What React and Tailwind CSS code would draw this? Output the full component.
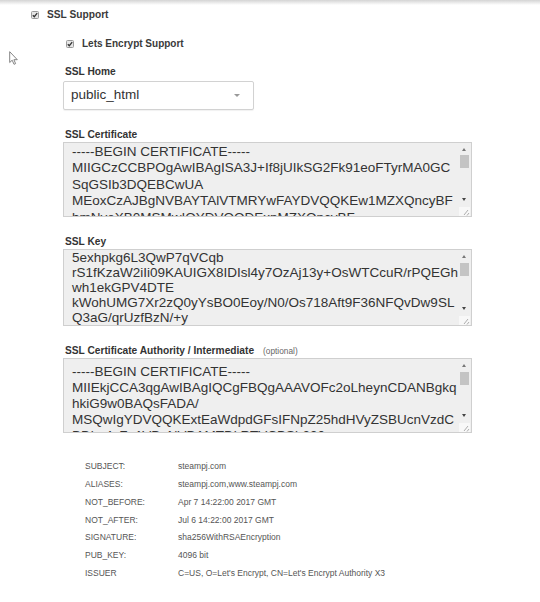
import React from "react";

const Check = () => (
  <svg width="8" height="8" viewBox="0 0 8 8" className="shrink-0">
    <rect x="0.5" y="0.5" width="7" height="7" rx="1" fill="#e6e6e6" stroke="#9a9a9a" />
    <path d="M1.8 4.2 L3.3 5.7 L6.2 2.2" fill="none" stroke="#333" strokeWidth="1.3" />
  </svg>
);

const Scrollbar = ({ thumbTop }) => (
  <div className="absolute right-[1px] top-0 bottom-0 w-[11px]">
    <div className="absolute top-[5px] left-[3px] w-0 h-0 border-l-[2.5px] border-r-[2.5px] border-b-[3px] border-l-transparent border-r-transparent border-b-[#777]" />
    <div className="absolute left-[1px] w-[9px] h-[13px] bg-[#c4c4c4]" style={{ top: thumbTop }} />
    <div className="absolute bottom-[15px] left-[3px] w-0 h-0 border-l-[2.5px] border-r-[2.5px] border-t-[3px] border-l-transparent border-r-transparent border-t-[#444]" />
    <div className="absolute bottom-0 left-0 w-[11px] h-[9px] bg-[#f8f8f8]">
      <svg width="11" height="9" viewBox="0 0 11 9" className="block">
        <path d="M9 3 L5 8 M10 6 L8 8.5" stroke="#999" strokeWidth="0.8" />
      </svg>
    </div>
  </div>
);

const Area = ({ lines, h, pt, lh, thumbTop }) => (
  <div
    className="relative ml-[63px] w-[409px] border border-[#cfcfcf] bg-[#efefef] overflow-hidden"
    style={{ height: h }}
  >
    <div
      className="pl-[8px] text-[13.5px] text-[#333] whitespace-pre"
      style={{ paddingTop: pt, lineHeight: lh }}
    >
      {lines.map((l, i) => (
        <div key={i}>{l}</div>
      ))}
    </div>
    <Scrollbar thumbTop={thumbTop} />
  </div>
);

const Label = ({ children, mt }) => (
  <div
    className="ml-[65px] h-[14px] leading-[14px] text-[10.2px] font-bold text-[#333]"
    style={{ marginTop: mt }}
  >
    {children}
  </div>
);

const rows = [
  ["SUBJECT:", "steampj.com"],
  ["ALIASES:", "steampj.com,www.steampj.com"],
  ["NOT_BEFORE:", "Apr 7 14:22:00 2017 GMT"],
  ["NOT_AFTER:", "Jul 6 14:22:00 2017 GMT"],
  ["SIGNATURE:", "sha256WithRSAEncryption"],
  ["PUB_KEY:", "4096 bit"],
  ["ISSUER", "C=US, O=Let's Encrypt, CN=Let's Encrypt Authority X3"],
];

export default function App() {
  return (
    <div className="relative w-[540px] h-[602px] overflow-hidden bg-white font-['Liberation_Sans',Arial,sans-serif]">
      <div className="h-[5px] bg-gradient-to-b from-[#d4d4d4] to-white" />

      <div className="mt-[2px] h-[15px] flex items-center pl-[31px]">
        <Check />
        <span className="ml-[8px] text-[10.2px] font-bold text-[#3a3a3a]">SSL Support</span>
      </div>

      <div className="mt-[14px] h-[15px] flex items-center pl-[66px]">
        <Check />
        <span className="ml-[8px] text-[10px] font-bold text-[#3a3a3a]">Lets Encrypt Support</span>
      </div>

      <Label mt={14}>SSL Home</Label>

      <div className="mt-[2px] ml-[63px] w-[191px] h-[29px] border border-[#d2d2d2] rounded-[2px] bg-white shadow-[0_1px_1px_rgba(0,0,0,0.06)] flex items-center justify-between pl-[7px] pr-[13px]">
        <span className="text-[13.5px] text-[#333]">public_html</span>
        <div className="w-0 h-0 border-l-[3px] border-r-[3px] border-t-[3px] border-l-transparent border-r-transparent border-t-[#999]" />
      </div>

      <Label mt={18}>SSL Certificate</Label>
      <Area
        h={75}
        pt={1}
        lh="16.4px"
        thumbTop={12}
        lines={[
          "-----BEGIN CERTIFICATE-----",
          "MIIGCzCCBPOgAwIBAgISA3J+If8jUIkSG2Fk91eoFTyrMA0GC",
          "SqGSIb3DQEBCwUA",
          "MEoxCzAJBgNVBAYTAlVTMRYwFAYDVQQKEw1MZXQncyBF",
          "bmNyeXB0MSMwIQYDVQQDExpMZXQncyBF",
        ]}
      />

      <Label mt={18}>SSL Key</Label>
      <Area
        h={77}
        pt={0}
        lh="15px"
        thumbTop={13}
        lines={[
          "5exhpkg6L3QwP7qVCqb",
          "rS1fKzaW2iIi09KAUIGX8IDIsl4y7OzAj13y+OsWTCcuR/rPQEGh",
          "wh1ekGPV4DTE",
          "kWohUMG7Xr2zQ0yYsBO0Eoy/N0/Os718Aft9F36NFQvDw9SL",
          "Q3aG/qrUzfBzN/+y",
        ]}
      />

      <div className="mt-[18px] ml-[65px] h-[14px] leading-[14px] flex items-baseline">
        <span className="text-[10.2px] font-bold text-[#333]">SSL Certificate Authority / Intermediate</span>
        <span className="ml-[9px] text-[8.3px] text-[#666]">(optional)</span>
      </div>
      <Area
        h={75}
        pt={5}
        lh="16.1px"
        thumbTop={13}
        lines={[
          "-----BEGIN CERTIFICATE-----",
          "MIIEkjCCA3qgAwIBAgIQCgFBQgAAAVOFc2oLheynCDANBgkq",
          "hkiG9w0BAQsFADA/",
          "MSQwIgYDVQQKExtEaWdpdGFsIFNpZ25hdHVyZSBUcnVzdC",
          "BDby4xFzAVBgNVBAMTDkRTVCBSb290",
        ]}
      />

      <div className="mt-[25px] ml-[85px] text-[8.5px] text-[#555]">
        {rows.map(([k, v]) => (
          <div key={k} className="flex h-[17.7px] items-center">
            <span className="w-[93px]">{k}</span>
            <span>{v}</span>
          </div>
        ))}
      </div>

      <svg
        className="absolute left-[9px] top-[51px]"
        width="10"
        height="15"
        viewBox="0 0 10 15"
      >
        <path
          d="M0.7 0.7 L0.7 11.5 L3.2 9.2 L5 13.3 L6.6 12.6 L4.9 8.7 L8.3 8.7 Z"
          fill="#fff"
          stroke="#777"
          strokeWidth="0.9"
          strokeLinejoin="round"
        />
      </svg>
    </div>
  );
}
